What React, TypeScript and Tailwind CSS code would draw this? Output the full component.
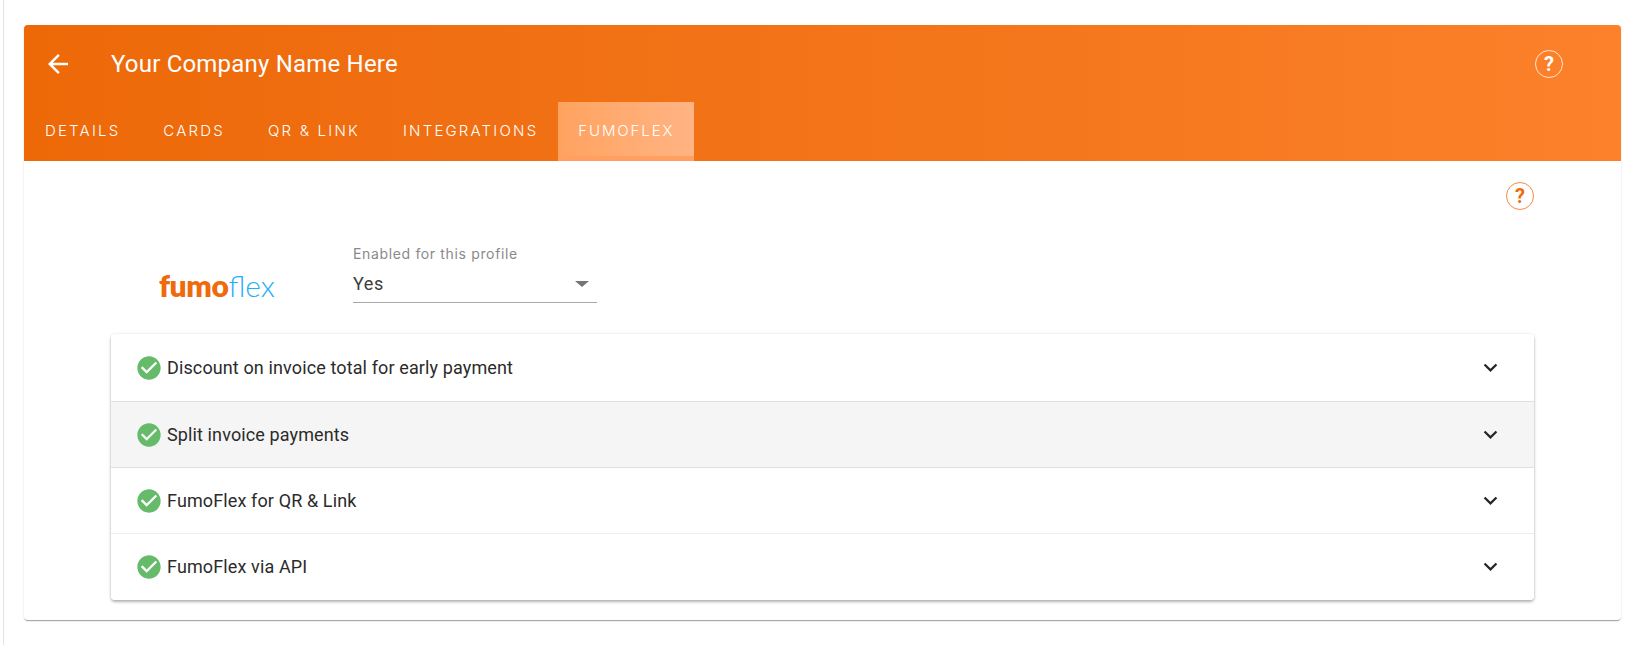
import React from "react";

const tabs = ["DETAILS", "CARDS", "QR & LINK", "INTEGRATIONS"];
const rows = [
  { label: "Discount on invoice total for early payment", hover: false, border: "border-[#e0e0e0]", h: "h-[68px]" },
  { label: "Split invoice payments", hover: true, border: "border-[#e0e0e0]", h: "h-[66px]" },
  { label: "FumoFlex for QR & Link", hover: false, border: "border-[#eeeeee]", h: "h-[66px]" },
  { label: "FumoFlex via API", hover: false, border: "border-transparent", h: "h-[66px]" },
];

function Help({ tone }: { tone: "white" | "orange" }) {
  const cls =
    tone === "white"
      ? "border-white/80 text-white"
      : "border-[#f58a45] text-[#ee6a0b]";
  return (
    <div
      className={`flex h-[28px] w-[28px] items-center justify-center rounded-full border font-['Roboto',sans-serif] text-[20px] leading-none font-bold ${cls}`}
    >
      ?
    </div>
  );
}

function Row({ label, hover, border, h }: { label: string; hover: boolean; border: string; h: string }) {
  return (
    <div
      className={`flex items-center justify-between border-b pr-[30px] pl-[24px] ${h} ${border} ${hover ? "bg-[#f5f5f5]" : "bg-white"}`}
    >
      <div className="flex items-center gap-[4px]">
        <svg width="28" height="28" viewBox="0 0 24 24" className="fill-[#66bb6a]">
          <path d="M12 2C6.48 2 2 6.48 2 12s4.48 10 10 10 10-4.48 10-10S17.52 2 12 2zm-2 15l-5-5 1.41-1.41L10 14.17l7.59-7.59L19 8l-9 9z" />
        </svg>
        <span className="font-['Roboto',sans-serif] text-[18px] tracking-[0.12px] text-[#2b2b2b]">{label}</span>
      </div>
      <svg width="27" height="27" viewBox="0 0 24 24" className="fill-[#262626]">
        <path d="M16.59 8.59L12 13.17 7.41 8.59 6 10l6 6 6-6z" />
      </svg>
    </div>
  );
}

export default function App() {
  return (
    <div className="min-h-[645px] bg-white pl-[3px]">
      <div className="min-h-[645px] border-l border-[#e4e4e4] pt-[25px] pr-[17px] pl-[20px]">
        <div className="rounded-[4px] bg-white shadow-[0_2px_1px_-1px_rgba(0,0,0,0.25),0_1px_1px_0_rgba(0,0,0,0.12),0_1px_3px_0_rgba(0,0,0,0.08)]">
          <div className="h-[136px] rounded-t-[4px] bg-gradient-to-r from-[#ed6908] via-[#f4761b] via-60% to-[#fc812a]">
            <div className="flex h-[77px] items-center pr-[58px] pl-[19px]">
              <svg width="30" height="30" viewBox="0 0 24 24" className="fill-white">
                <path d="M20 11H7.83l5.59-5.59L12 4l-8 8 8 8 1.41-1.41L7.83 13H20v-2z" />
              </svg>
              <span className="ml-[38px] font-['Roboto',sans-serif] text-[24px] tracking-[0.2px] text-white">
                Your Company Name Here
              </span>
              <div className="ml-auto">
                <Help tone="white" />
              </div>
            </div>
            <div className="flex h-[59px] gap-[1px]">
              {tabs.map((t) => (
                <div
                  key={t}
                  className="flex items-center px-[21px] font-['Inter',sans-serif] text-[15px] font-light tracking-[2.2px] text-white"
                >
                  {t}
                </div>
              ))}
              <div className="-ml-[2px] flex w-[136px] items-center justify-center border-b-[5px] border-[#ffa060] bg-gradient-to-r from-[#ffa25f] to-[#ffb483] pt-[4px] font-['Inter',sans-serif] text-[15px] font-light tracking-[1.9px] text-white">
                FUMOFLEX
              </div>
            </div>
          </div>
          <div className="px-[87px] pt-[21px] pb-[20px]">
            <div className="flex justify-end">
              <Help tone="orange" />
            </div>
            <div className="mt-[36px] flex">
              <div className="flex w-[242px] items-end pb-[2px] pl-[48px]">
                <span className="font-['Lato',sans-serif] text-[30px] leading-[32px] font-extrabold tracking-[-0.4px] text-[#ee6a0b]">
                  fumo
                </span>
                <span className="font-['Lato',sans-serif] text-[30px] leading-[32px] font-light text-[#1eb0f5]">flex</span>
              </div>
              <div className="w-[244px]">
                <div className="font-['Inter',sans-serif] text-[14px] leading-[16px] tracking-[0.65px] text-[#8a8a8a]">
                  Enabled for this profile
                </div>
                <div className="mt-[6px] flex h-[35px] items-center justify-between border-b border-[#a8a8a8] pr-[8px] pb-[3px]">
                  <span className="font-['Roboto',sans-serif] text-[18px] tracking-[0.6px] text-[#3c3c3c]">Yes</span>
                  <div className="h-0 w-0 border-x-[7px] border-t-[6px] border-x-transparent border-t-[#757575]" />
                </div>
              </div>
            </div>
            <div className="mt-[31px] overflow-hidden rounded-[4px] shadow-[0_2px_3px_0_rgba(0,0,0,0.28),0_0_3px_0_rgba(0,0,0,0.1)]">
              {rows.map((r) => (
                <Row key={r.label} {...r} />
              ))}
            </div>
          </div>
        </div>
      </div>
    </div>
  );
}
